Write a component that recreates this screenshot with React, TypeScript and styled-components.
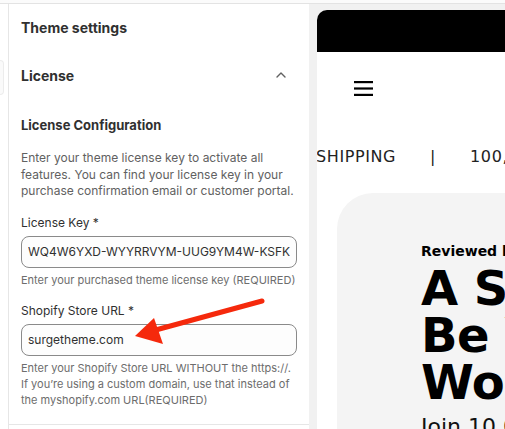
import styled, { createGlobalStyle } from "styled-components";

const GlobalStyle = createGlobalStyle`
  body {
    margin: 0;
    overflow: hidden;
    background: #ffffff;
    font-family: Inter, "Liberation Sans", sans-serif;
    -webkit-font-smoothing: antialiased;
  }
`;

function ChevronUp() {
  return (
    <svg width="10" height="6" viewBox="0 0 10 6" fill="none">
      <path d="M1 5L5 1L9 5" stroke="#616161" strokeWidth="1.4" strokeLinecap="round" strokeLinejoin="round" />
    </svg>
  );
}

function Hamburger() {
  return (
    <svg width="19" height="15" viewBox="0 0 19 15">
      <rect x="0" y="0" width="19" height="2.2" fill="#000" />
      <rect x="0" y="6.4" width="19" height="2.2" fill="#000" />
      <rect x="0" y="12.8" width="19" height="2.2" fill="#000" />
    </svg>
  );
}

function RedArrow() {
  return (
    <ArrowLayer width="505" height="429" viewBox="0 0 505 429">
      <line x1="262" y1="301" x2="152" y2="331" stroke="#f5290c" strokeWidth="5" strokeLinecap="round" />
      <polygon points="135,336 154,318 163,344" fill="#f5290c" />
    </ArrowLayer>
  );
}

export default function App() {
  return (
    <Frame>
      <GlobalStyle />
      <TopStrip />
      <Workspace>
        <Rail>
          <RailTab />
        </Rail>
        <Sidebar>
          <SidebarTitle>Theme settings</SidebarTitle>
          <AccordionHeader>
            <span>License</span>
            <ChevronUp />
          </AccordionHeader>
          <AccordionBody>
            <SectionHeading>License Configuration</SectionHeading>
            <Description>
              Enter your theme license key to activate all features. You can find your license key in your
              purchase confirmation email or customer portal.
            </Description>
            <Field>
              <Label>License Key *</Label>
              <TextInput readOnly value="WQ4W6YXD-WYYRRVYM-UUG9YM4W-KSFK" />
              <Helper>Enter your purchased theme license key (REQUIRED)</Helper>
            </Field>
            <Field>
              <Label>Shopify Store URL *</Label>
              <TextInput readOnly value="surgetheme.com" />
              <Helper>
                Enter your Shopify Store URL WITHOUT the https://. If you’re using a custom domain, use that
                instead of the myshopify.com URL(REQUIRED)
              </Helper>
            </Field>
          </AccordionBody>
        </Sidebar>
        <PreviewArea>
          <Preview>
            <BlackBar />
            <NavBar>
              <Hamburger />
            </NavBar>
            <Marquee>
              <MarqueeItem>SHIPPING</MarqueeItem>
              <MarqueeItem>|</MarqueeItem>
              <MarqueeItem>100,000+ HAPPY CUSTOMERS</MarqueeItem>
            </Marquee>
            <HeroCard>
              <Eyebrow>Reviewed by experts</Eyebrow>
              <HeroTitle>
                <HeroLine>A Simple Way To</HeroLine>
                <HeroLine>Be Your Best</HeroLine>
                <HeroLine>Wonderful Self</HeroLine>
              </HeroTitle>
              <HeroSub>Join 10,000+ customers</HeroSub>
            </HeroCard>
          </Preview>
        </PreviewArea>
      </Workspace>
      <RedArrow />
    </Frame>
  );
}

const Frame = styled.div`
  position: relative;
  width: 505px;
  height: 429px;
  overflow: hidden;
  display: flex;
  flex-direction: column;
`;

const TopStrip = styled.div`
  height: 3px;
  flex-shrink: 0;
  background: #fbfbfb;
  border-bottom: 1px solid #e3e3e3;
`;

const Workspace = styled.div`
  flex: 1;
  display: flex;
  min-height: 0;
`;

const Rail = styled.div`
  width: 8px;
  flex-shrink: 0;
  border-right: 1px solid #e6e6e6;
  background: #ffffff;
`;

const RailTab = styled.div`
  width: 3px;
  height: 33px;
  margin-top: 56px;
  border: 1px solid #ececec;
  border-left: none;
  border-radius: 0 4px 4px 0;
  background: #fafafa;
`;

const Sidebar = styled.aside`
  width: 300px;
  flex-shrink: 0;
  padding: 0 12px;
  box-sizing: border-box;
  background: #ffffff;
  color: #303030;
`;

const SidebarTitle = styled.h2`
  margin: 0;
  height: 46px;
  display: flex;
  align-items: center;
  font-size: 14px;
  font-weight: 650;
`;

const AccordionHeader = styled.div`
  height: 50px;
  display: flex;
  align-items: center;
  justify-content: space-between;
  padding-right: 11px;
  font-size: 14px;
  font-weight: 650;
`;

const AccordionBody = styled.div`
  margin: 0 -12px;
  padding: 15px 12px 16px;
  border-bottom: 1px solid #e6e6e6;
`;

const SectionHeading = styled.h3`
  margin: 0;
  font-size: 13px;
  line-height: 20px;
  font-weight: 650;
`;

const Description = styled.p`
  margin: 15px 0 0;
  font-size: 12px;
  line-height: 16.5px;
  color: #616161;
`;

const Field = styled.div`
  display: flex;
  flex-direction: column;
  margin-top: 15px;
`;

const Label = styled.label`
  font-size: 12px;
  line-height: 16px;
  color: #303030;
`;

const TextInput = styled.input`
  margin-top: 5px;
  height: 32px;
  box-sizing: border-box;
  padding: 0 6px;
  border: 1px solid #8a8a8a;
  border-radius: 8px;
  font-family: Inter, "Liberation Sans", sans-serif;
  font-size: 12px;
  color: #303030;
  background: #fdfdfd;
  outline: none;
`;

const Helper = styled.p`
  margin: 4px 0 0;
  font-size: 11px;
  line-height: 16px;
  color: #6d6d6d;
`;

const PreviewArea = styled.div`
  flex: 1;
  min-width: 0;
  background: #f1f1f1;
  padding: 6px 0 0 8px;
  display: flex;
`;

const Preview = styled.div`
  flex: 1;
  min-width: 0;
  background: #ffffff;
  border-radius: 10px 0 0 0;
  overflow: hidden;
  display: flex;
  flex-direction: column;
  font-family: "DejaVu Sans", Verdana, sans-serif;
`;

const BlackBar = styled.div`
  height: 42px;
  flex-shrink: 0;
  background: #000000;
`;

const NavBar = styled.div`
  height: 75px;
  flex-shrink: 0;
  display: flex;
  align-items: center;
  padding-left: 37px;
  padding-bottom: 2px;
  box-sizing: border-box;
`;

const Marquee = styled.div`
  height: 62px;
  flex-shrink: 0;
  display: flex;
  align-items: center;
  gap: 34px;
  white-space: nowrap;
  margin-left: -1px;
  padding-bottom: 4px;
  box-sizing: border-box;
`;

const MarqueeItem = styled.span`
  font-size: 16px;
  letter-spacing: 0.6px;
  color: #222222;
`;

const HeroCard = styled.section`
  margin: 4px 0 0 20px;
  flex: 1;
  background: #f4f4f4;
  border-radius: 36px 0 0 0;
  padding: 50px 0 0 84px;
  white-space: nowrap;
  overflow: hidden;
`;

const Eyebrow = styled.div`
  font-size: 14px;
  font-weight: 700;
  line-height: 16px;
  color: #000000;
`;

const HeroTitle = styled.h1`
  margin: 6px 0 0;
  font-size: 48px;
  line-height: 47px;
  font-weight: 700;
  color: #000000;
  letter-spacing: -0.5px;
`;

const HeroLine = styled.div``;

const HeroSub = styled.div`
  margin-top: 8px;
  font-size: 22px;
  color: #111111;
`;

const ArrowLayer = styled.svg`
  position: absolute;
  left: 0;
  top: 0;
  pointer-events: none;
`;
